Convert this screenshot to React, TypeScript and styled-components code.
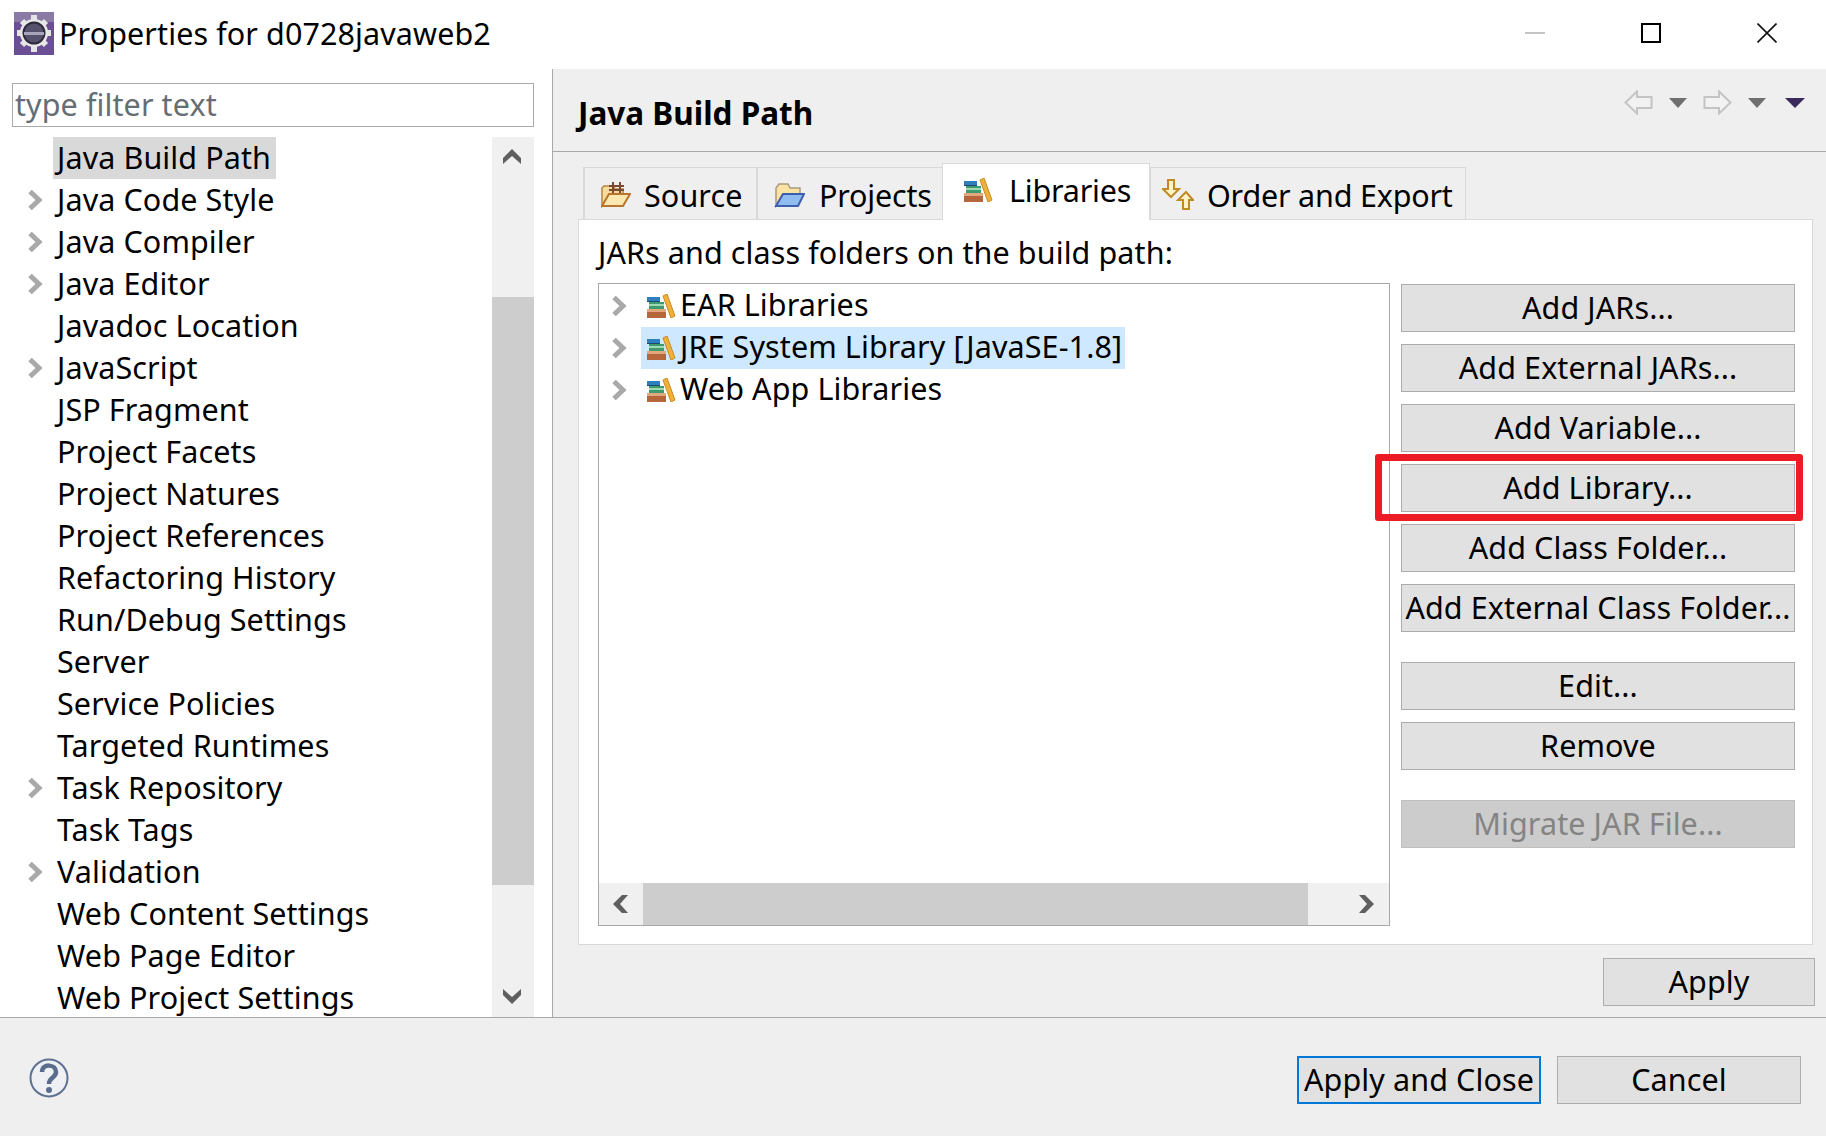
import React from 'react';
import styled, { createGlobalStyle } from 'styled-components';

const GlobalStyle = createGlobalStyle`
  html, body {
    margin: 0;
    padding: 0;
    background: #fff;
  }
  * {
    box-sizing: border-box;
  }
`;

const Window = styled.div`
  width: 1826px;
  height: 1136px;
  display: flex;
  flex-direction: column;
  overflow: hidden;
  font-family: 'Noto Sans', 'Open Sans', sans-serif;
  font-size: 30.5px;
  letter-spacing: 0.1px;
  color: #000;
`;

const TitleBar = styled.div`
  height: 69px;
  flex: none;
  display: flex;
  align-items: center;
  padding: 0 49px 3px 14px;
  background: #fff;
`;

const TitleText = styled.div`
  margin-left: 5px;
  flex: 1;
  white-space: nowrap;
`;

const WindowControls = styled.div`
  display: flex;
  align-items: center;
  gap: 96px;
`;

const Body = styled.div`
  height: 948px;
  flex: none;
  display: flex;
`;

const LeftPane = styled.div`
  width: 553px;
  flex: none;
  padding: 14px 18px 0 12px;
  background: #fff;
  border-right: 1px solid #a8a8a8;
  display: flex;
  flex-direction: column;
`;

const FilterInput = styled.div`
  height: 44px;
  flex: none;
  border: 1px solid #ababab;
  padding-left: 2px;
  line-height: 41px;
  color: #666d73;
`;

const TreeArea = styled.div`
  margin-top: 10px;
  flex: 1;
  min-height: 0;
  display: flex;
  overflow: hidden;
`;

const PrefList = styled.div`
  flex: 1;
`;

const PrefRow = styled.div`
  height: 42px;
  display: flex;
  align-items: center;
  padding-left: 15px;
`;

const ChevronSlot = styled.div`
  width: 26px;
  flex: none;
  display: flex;
  align-items: center;
`;

const PrefLabel = styled.div<{ $selected?: boolean }>`
  height: 42px;
  line-height: 40px;
  padding: 0 5px 0 4px;
  white-space: nowrap;
  background: ${({ $selected }) => ($selected ? '#d9d9d9' : 'transparent')};
`;

const VScroll = styled.div`
  width: 42px;
  flex: none;
  background: #f0f0f0;
  display: flex;
  flex-direction: column;
  align-items: center;
`;

const VScrollEnd = styled.div<{ $bottom?: boolean }>`
  width: 100%;
  flex: ${({ $bottom }) => ($bottom ? '1' : 'none')};
  height: ${({ $bottom }) => ($bottom ? 'auto' : '160px')};
  display: flex;
  justify-content: center;
  align-items: ${({ $bottom }) => ($bottom ? 'flex-end' : 'flex-start')};
  padding: ${({ $bottom }) => ($bottom ? '0 2px 11px 0' : '10px 2px 0 0')};
`;

const VThumb = styled.div`
  width: 100%;
  height: 588px;
  flex: none;
  background: #cdcdcd;
`;

const RightPane = styled.div`
  flex: 1;
  min-width: 0;
  background: #efefef;
  display: flex;
  flex-direction: column;
`;

const PageHeader = styled.div`
  height: 83px;
  flex: none;
  display: flex;
  align-items: center;
  padding: 0 21px 0 25px;
  border-bottom: 1px solid #a8a8a8;
`;

const PageTitle = styled.div`
  flex: 1;
  font-size: 31.5px;
  font-weight: 700;
  letter-spacing: 0;
  margin-top: 4px;
`;

const NavIcons = styled.div`
  display: flex;
  align-items: center;
  margin-top: -15px;
  gap: 16px;
`;

const NavMenuCaret = styled.div`
  display: flex;
  margin-left: 3px;
`;

const TabStrip = styled.div`
  height: 67px;
  flex: none;
  display: flex;
  align-items: flex-end;
  padding-left: 30px;
`;

const Tab = styled.div<{ $active?: boolean; $width: number; $inset: number; $tight?: boolean }>`
  width: ${({ $width }) => $width}px;
  height: ${({ $active }) => ($active ? '57px' : '52px')};
  display: flex;
  align-items: center;
  gap: 13px;
  padding: ${({ $active }) => ($active ? '0 0 5px' : '3px 0 0')};
  padding-left: ${({ $inset }) => $inset}px;
  white-space: nowrap;
  letter-spacing: ${({ $tight }) => ($tight ? '-0.2px' : '0.1px')};
  background: ${({ $active }) => ($active ? '#fff' : 'transparent')};
  border: 1px solid #d9d9d9;
  border-left-width: ${({ $active }) => ($active ? '1px' : '2px')};
  border-bottom: none;
  margin-right: -1px;
  position: relative;
  z-index: ${({ $active }) => ($active ? 1 : 0)};
  margin-bottom: ${({ $active }) => ($active ? '-1px' : '0')};
`;

const TabLabel = styled.span<{ $shift?: number }>`
  margin-left: ${({ $shift }) => $shift ?? 0}px;
`;

const TabPanel = styled.div`
  width: 1235px;
  height: 726px;
  flex: none;
  margin-left: 25px;
  background: #fff;
  border: 1px solid #d9d9d9;
  padding: 0 0 0 19px;
  display: flex;
  flex-direction: column;
`;

const PanelLabel = styled.div`
  height: 63px;
  flex: none;
  line-height: 65px;
  white-space: nowrap;
`;

const PanelColumns = styled.div`
  display: flex;
  gap: 11px;
`;

const LibraryTree = styled.div`
  width: 792px;
  height: 643px;
  flex: none;
  border: 1px solid #a8a8a8;
  display: flex;
  flex-direction: column;
`;

const LibraryRows = styled.div`
  flex: 1;
  padding-top: 1px;
`;

const LibraryRow = styled.div`
  height: 42px;
  display: flex;
  align-items: center;
  padding-left: 12px;
`;

const LibraryChevron = styled.div`
  width: 30px;
  flex: none;
  display: flex;
  align-items: center;
`;

const LibraryEntry = styled.div<{ $selected?: boolean }>`
  height: 42px;
  line-height: 38px;
  display: flex;
  align-items: flex-start;
  gap: 4px;
  padding: 0 3px 0 5px;
  white-space: nowrap;
  background: ${({ $selected }) => ($selected ? '#cde8ff' : 'transparent')};
`;

const LibraryIconSlot = styled.div`
  display: flex;
  padding-top: 9px;
`;

const HScroll = styled.div`
  height: 42px;
  flex: none;
  background: #f0f0f0;
  display: flex;
  align-items: center;
`;

const HScrollEnd = styled.div<{ $right?: boolean }>`
  flex: ${({ $right }) => ($right ? '1' : 'none')};
  width: ${({ $right }) => ($right ? 'auto' : '42px')};
  margin-right: ${({ $right }) => ($right ? '0' : '2px')};
  display: flex;
  justify-content: ${({ $right }) => ($right ? 'flex-end' : 'center')};
  padding-right: ${({ $right }) => ($right ? '13px' : '0')};
`;

const HThumb = styled.div`
  width: 665px;
  height: 100%;
  background: #cdcdcd;
`;

const ButtonColumn = styled.div`
  width: 394px;
  padding-top: 1px;
  display: flex;
  flex-direction: column;
  gap: 12px;
`;

const Button = styled.div<{ $width?: number; $disabled?: boolean; $focused?: boolean; $gapBefore?: boolean }>`
  width: ${({ $width }) => ($width ? `${$width}px` : '100%')};
  height: 48px;
  flex: none;
  display: flex;
  align-items: center;
  justify-content: center;
  padding-bottom: 2px;
  white-space: nowrap;
  position: relative;
  margin-top: ${({ $gapBefore }) => ($gapBefore ? '18px' : '0')};
  background: ${({ $disabled }) => ($disabled ? '#cccccc' : '#e1e1e1')};
  color: ${({ $disabled }) => ($disabled ? '#848484' : '#000')};
  border: ${({ $focused }) => ($focused ? '2px solid #0078d7' : '1px solid #adadad')};
  ${({ $disabled }) => ($disabled ? 'border-color: #bfbfbf;' : '')}
`;

const RedMarker = styled.div`
  position: absolute;
  left: -27px;
  right: -9px;
  top: -11px;
  bottom: -10px;
  border: 7px solid #ed1c24;
  border-radius: 3px;
`;

const ApplyRow = styled.div`
  margin-top: 13px;
  padding-right: 11px;
  display: flex;
  justify-content: flex-end;
`;

const Footer = styled.div`
  flex: 1;
  background: #efefef;
  border-top: 1px solid #a8a8a8;
  padding: 38px 25px 0 29px;
  display: flex;
  align-items: flex-start;
`;

const HelpSlot = styled.div`
  flex: 1;
  margin-top: 2px;
`;

const FooterButtons = styled.div`
  display: flex;
  gap: 16px;
`;

const ScrollChevronSvg = styled.svg<{ $rotate: number }>`
  transform: rotate(${({ $rotate }) => $rotate}deg);
`;

const NavArrowSvg = styled.svg<{ $flip?: boolean }>`
  transform: ${({ $flip }) => ($flip ? 'scaleX(-1)' : 'none')};
`;

const ChevronRight = () => (
  <svg width="16" height="20" viewBox="0 0 16 20">
    <path d="M3 1.5 L12 10 L3 18.5" fill="none" stroke="#a9a9a9" strokeWidth="5" />
  </svg>
);

const ScrollChevron = ({ dir }: { dir: 'up' | 'down' | 'left' | 'right' }) => {
  const rot = { up: 0, right: 90, down: 180, left: 270 }[dir];
  return (
    <ScrollChevronSvg $rotate={rot} width="18" height="18" viewBox="0 0 18 18">
      <path d="M0 17 V11 L9 2 L18 11 V17 L9 9 Z" fill="#5f5f5f" />
    </ScrollChevronSvg>
  );
};

const LibraryIcon = () => (
  <svg width="30" height="24" viewBox="0 0 30 24">
    <rect x="1" y="17" width="19" height="7" fill="#b5663a" />
    <rect x="1" y="15" width="19" height="3" fill="#e2a77c" />
    <rect x="3" y="8" width="15" height="7" fill="#3f9a6c" />
    <rect x="3" y="10" width="15" height="2" fill="#9fd8b4" />
    <rect x="1" y="3" width="13" height="5" fill="#2f7fbd" />
    <rect x="1" y="7" width="13" height="1" fill="#1c4a70" />
    <path d="M17 2 L21 0 L29 22 L25 24 Z" fill="#efb13a" stroke="#c98a22" strokeWidth="1" />
  </svg>
);

const SourceIcon = () => (
  <svg width="30" height="26" viewBox="0 0 30 26">
    <path d="M1 24 V6 L3 4 H12 L14 7 H22 V12 H8 L1 24 Z" fill="#f6dc9c" stroke="#b8853f" strokeWidth="1.5" />
    <path d="M1 24 L8 12 H29 L22 24 Z" fill="#fbe7b0" stroke="#b8762c" strokeWidth="2" />
    <path d="M12 0 V11 M19 0 V11 M8 4 H23 M8 8 H23" stroke="#7b4a30" strokeWidth="2" fill="none" />
  </svg>
);

const ProjectsIcon = () => (
  <svg width="32" height="26" viewBox="0 0 32 26">
    <path d="M3 24 V6 L6 2 H15 L17 6 H27 V12 H10 Z" fill="#fbe3a4" stroke="#a89a80" strokeWidth="1.5" />
    <path d="M3 24 L10 12 H31 L25 24 Z" fill="#8fbdf0" stroke="#3d5fb0" strokeWidth="2" />
  </svg>
);

const OrderIcon = () => (
  <svg width="32" height="32" viewBox="0 0 32 32">
    <path d="M6 1 H12 V10 H17 L9 18 L1 10 H6 Z" fill="#fdf3c8" stroke="#c08a24" strokeWidth="2" />
    <path d="M21 30 H27 V21 H31 L24 13 L16 21 H21 Z" fill="#fdf3c8" stroke="#c08a24" strokeWidth="2" />
  </svg>
);

const EclipseIcon = () => (
  <svg width="40" height="43" viewBox="0 0 40 43">
    <rect width="40" height="43" fill="#6b4f94" />
    <rect width="40" height="10" fill="#8a7ba6" />
    <g stroke="#e4e4e4" strokeWidth="6">
      <path d="M20 3 V40 M3 21 H37 M8 9 L32 33 M32 9 L8 33" />
    </g>
    <circle cx="20" cy="21" r="14" fill="#e8e8e8" />
    <circle cx="20" cy="21" r="10.5" fill="#56516c" stroke="#2d2a3a" strokeWidth="2" />
    <rect x="10" y="20" width="20" height="3" fill="#a8a4bb" />
  </svg>
);

const MinimizeIcon = () => (
  <svg width="20" height="20" viewBox="0 0 20 20">
    <path d="M0 10 H20" stroke="#c4c4c4" strokeWidth="2" />
  </svg>
);

const MaximizeIcon = () => (
  <svg width="20" height="20" viewBox="0 0 20 20">
    <rect x="1" y="1" width="18" height="18" fill="none" stroke="#000" strokeWidth="2" />
  </svg>
);

const CloseIcon = () => (
  <svg width="20" height="20" viewBox="0 0 20 20">
    <path d="M0.5 0.5 L19.5 19.5 M19.5 0.5 L0.5 19.5" stroke="#111" strokeWidth="1.6" />
  </svg>
);

const NavArrow = ({ flip }: { flip?: boolean }) => (
  <NavArrowSvg $flip={flip} width="29" height="25" viewBox="0 0 29 25">
    <path d="M13 1.5 L1.5 12.5 L13 23.5 V18 H27.5 V7 H13 Z" fill="#f2f2f2" stroke="#c4c4c4" strokeWidth="2" />
  </NavArrowSvg>
);

const NavCaret = ({ color = '#6f6f6f', width = 18 }: { color?: string; width?: number }) => (
  <svg width={width} height="10" viewBox="0 0 18 10" preserveAspectRatio="none">
    <path d="M0 0 H18 L9 10 Z" fill={color} />
  </svg>
);

const HelpIcon = () => (
  <svg width="40" height="40" viewBox="0 0 40 40">
    <circle cx="20" cy="20" r="18.5" fill="#eef0f3" stroke="#5f7191" strokeWidth="2" />
    <path d="M13 14 C13 5 27 6 27 14 C27 20 20 19 20 26" fill="none" stroke="#5a6c8c" strokeWidth="4.5" />
    <circle cx="20" cy="32" r="3" fill="#5a6c8c" />
  </svg>
);

const prefs: { name: string; expandable?: boolean; selected?: boolean }[] = [
  { name: 'Java Build Path', selected: true },
  { name: 'Java Code Style', expandable: true },
  { name: 'Java Compiler', expandable: true },
  { name: 'Java Editor', expandable: true },
  { name: 'Javadoc Location' },
  { name: 'JavaScript', expandable: true },
  { name: 'JSP Fragment' },
  { name: 'Project Facets' },
  { name: 'Project Natures' },
  { name: 'Project References' },
  { name: 'Refactoring History' },
  { name: 'Run/Debug Settings' },
  { name: 'Server' },
  { name: 'Service Policies' },
  { name: 'Targeted Runtimes' },
  { name: 'Task Repository', expandable: true },
  { name: 'Task Tags' },
  { name: 'Validation', expandable: true },
  { name: 'Web Content Settings' },
  { name: 'Web Page Editor' },
  { name: 'Web Project Settings' },
];

const libraries = [
  { name: 'EAR Libraries' },
  { name: 'JRE System Library [JavaSE-1.8]', selected: true },
  { name: 'Web App Libraries' },
];

export default function App() {
  return (
    <Window>
      <GlobalStyle />
      <TitleBar>
        <EclipseIcon />
        <TitleText>Properties for d0728javaweb2</TitleText>
        <WindowControls>
          <MinimizeIcon />
          <MaximizeIcon />
          <CloseIcon />
        </WindowControls>
      </TitleBar>
      <Body>
        <LeftPane>
          <FilterInput>type filter text</FilterInput>
          <TreeArea>
            <PrefList>
              {prefs.map(pref => (
                <PrefRow key={pref.name}>
                  <ChevronSlot>{pref.expandable && <ChevronRight />}</ChevronSlot>
                  <PrefLabel $selected={pref.selected}>{pref.name}</PrefLabel>
                </PrefRow>
              ))}
            </PrefList>
            <VScroll>
              <VScrollEnd>
                <ScrollChevron dir="up" />
              </VScrollEnd>
              <VThumb />
              <VScrollEnd $bottom>
                <ScrollChevron dir="down" />
              </VScrollEnd>
            </VScroll>
          </TreeArea>
        </LeftPane>
        <RightPane>
          <PageHeader>
            <PageTitle>Java Build Path</PageTitle>
            <NavIcons>
              <NavArrow />
              <NavCaret />
              <NavArrow flip />
              <NavCaret />
              <NavMenuCaret>
                <NavCaret color="#3b2a5c" width={20} />
              </NavMenuCaret>
            </NavIcons>
          </PageHeader>
          <TabStrip>
            <Tab $width={174} $inset={16}>
              <SourceIcon />
              <TabLabel>Source</TabLabel>
            </Tab>
            <Tab $width={187} $inset={15} $tight>
              <ProjectsIcon />
              <TabLabel $shift={1}>Projects</TabLabel>
            </Tab>
            <Tab $active $width={208} $inset={20} $tight>
              <LibraryIcon />
              <TabLabel $shift={3}>Libraries</TabLabel>
            </Tab>
            <Tab $width={317} $inset={11} $tight>
              <OrderIcon />
              <TabLabel>Order and Export</TabLabel>
            </Tab>
          </TabStrip>
          <TabPanel>
            <PanelLabel>JARs and class folders on the build path:</PanelLabel>
            <PanelColumns>
              <LibraryTree>
                <LibraryRows>
                  {libraries.map(lib => (
                    <LibraryRow key={lib.name}>
                      <LibraryChevron>
                        <ChevronRight />
                      </LibraryChevron>
                      <LibraryEntry $selected={lib.selected}>
                        <LibraryIconSlot>
                          <LibraryIcon />
                        </LibraryIconSlot>
                        {lib.name}
                      </LibraryEntry>
                    </LibraryRow>
                  ))}
                </LibraryRows>
                <HScroll>
                  <HScrollEnd>
                    <ScrollChevron dir="left" />
                  </HScrollEnd>
                  <HThumb />
                  <HScrollEnd $right>
                    <ScrollChevron dir="right" />
                  </HScrollEnd>
                </HScroll>
              </LibraryTree>
              <ButtonColumn>
                <Button>Add JARs...</Button>
                <Button>Add External JARs...</Button>
                <Button>Add Variable...</Button>
                <Button>
                  Add Library...
                  <RedMarker />
                </Button>
                <Button>Add Class Folder...</Button>
                <Button>Add External Class Folder...</Button>
                <Button $gapBefore>Edit...</Button>
                <Button>Remove</Button>
                <Button $gapBefore $disabled>
                  Migrate JAR File...
                </Button>
              </ButtonColumn>
            </PanelColumns>
          </TabPanel>
          <ApplyRow>
            <Button $width={212}>Apply</Button>
          </ApplyRow>
        </RightPane>
      </Body>
      <Footer>
        <HelpSlot>
          <HelpIcon />
        </HelpSlot>
        <FooterButtons>
          <Button $width={244} $focused>
            Apply and Close
          </Button>
          <Button $width={244}>Cancel</Button>
        </FooterButtons>
      </Footer>
    </Window>
  );
}
